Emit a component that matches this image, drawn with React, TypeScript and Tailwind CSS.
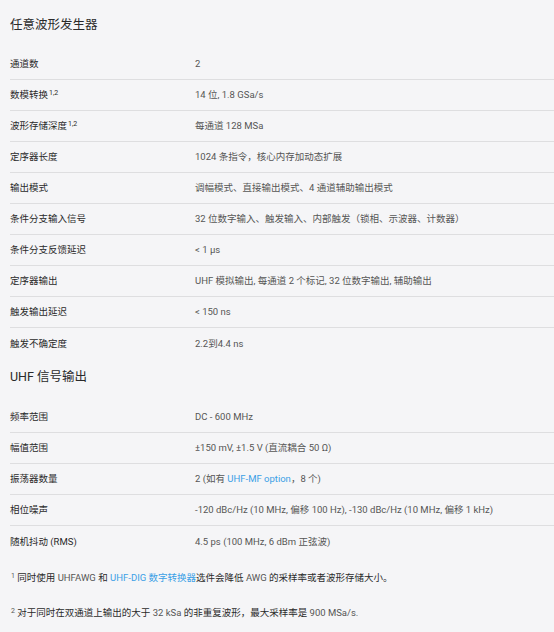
import React from "react";

const font = { fontFamily: "Roboto, 'Noto Sans CJK SC', sans-serif" };

type Row = { label: React.ReactNode; value: React.ReactNode };

const Sup = ({ children }: { children: React.ReactNode }) => (
  <sup className="text-[7px] relative -top-[3px] align-baseline ml-px">{children}</sup>
);

const Link = ({ children }: { children: React.ReactNode }) => (
  <span className="text-[#3ba0e6]">{children}</span>
);

const section1: Row[] = [
  { label: "通道数", value: "2" },
  { label: <>数模转换<Sup>1,2</Sup></>, value: "14 位, 1.8 GSa/s" },
  { label: <>波形存储深度<Sup>1,2</Sup></>, value: "每通道 128 MSa" },
  { label: "定序器长度", value: "1024 条指令，核心内存加动态扩展" },
  { label: "输出模式", value: "调幅模式、直接输出模式、4 通道辅助输出模式" },
  { label: "条件分支输入信号", value: "32 位数字输入、触发输入、内部触发（锁相、示波器、计数器）" },
  { label: "条件分支反馈延迟", value: "< 1 µs" },
  { label: "定序器输出", value: "UHF 模拟输出, 每通道 2 个标记, 32 位数字输出, 辅助输出" },
  { label: "触发输出延迟", value: "< 150 ns" },
  { label: "触发不确定度", value: "2.2到4.4 ns" },
];

const section2: Row[] = [
  { label: "频率范围", value: "DC - 600 MHz" },
  { label: "幅值范围", value: "±150 mV, ±1.5 V (直流耦合 50 Ω)" },
  { label: "振荡器数量", value: <>2 (如有 <Link>UHF-MF option</Link>，8 个)</> },
  { label: "相位噪声", value: "-120 dBc/Hz (10 MHz, 偏移 100 Hz), -130 dBc/Hz (10 MHz, 偏移 1 kHz)" },
  { label: "随机抖动 (RMS)", value: "4.5 ps (100 MHz, 6 dBm 正弦波)" },
];

function Table({ rows }: { rows: Row[] }) {
  return (
    <div className="flex flex-col">
      {rows.map((r, i) => (
        <div
          key={i}
          className={`grid grid-cols-[185px_1fr] items-center h-[31px] ${
            i < rows.length - 1 ? "border-b border-[#dedee0]" : ""
          }`}
        >
          <div className="text-[9.5px] leading-[14px] text-[#2a2a2a] whitespace-nowrap">{r.label}</div>
          <div className="text-[9.5px] leading-[14px] text-[#555555] whitespace-nowrap">{r.value}</div>
        </div>
      ))}
    </div>
  );
}

export default function App() {
  return (
    <div className="w-[554px] h-[632px] bg-[#f5f5f7] pl-[10px] overflow-hidden" style={font}>
      <h2 className="text-[12.5px] leading-[16px] text-[#2a2a2a] pt-[17px] pb-[16px] font-normal">任意波形发生器</h2>
      <Table rows={section1} />
      <h2 className="text-[12.5px] leading-[16px] text-[#2a2a2a] pt-[10px] pb-[17px] font-normal">UHF 信号输出</h2>
      <Table rows={section2} />
      <div className="pt-[14px] text-[9.5px] leading-[14px] text-[#555555]">
        <p className="h-[35px]">
          <Sup>1</Sup> <span className="text-[#2a2a2a]">同时使用</span> UHFAWG <span className="text-[#2a2a2a]">和</span>{" "}
          <Link>UHF-DIG 数字转换器</Link>
          <span className="text-[#2a2a2a]">选件会降低</span> AWG <span className="text-[#2a2a2a]">的采样率或者波形存储大小。</span>
        </p>
        <p>
          <Sup>2</Sup> <span className="text-[#2a2a2a]">对于同时在双通道上输出的大于</span> 32 kSa{" "}
          <span className="text-[#2a2a2a]">的非重复波形，最大采样率是</span> 900 MSa/s.
        </p>
      </div>
    </div>
  );
}
